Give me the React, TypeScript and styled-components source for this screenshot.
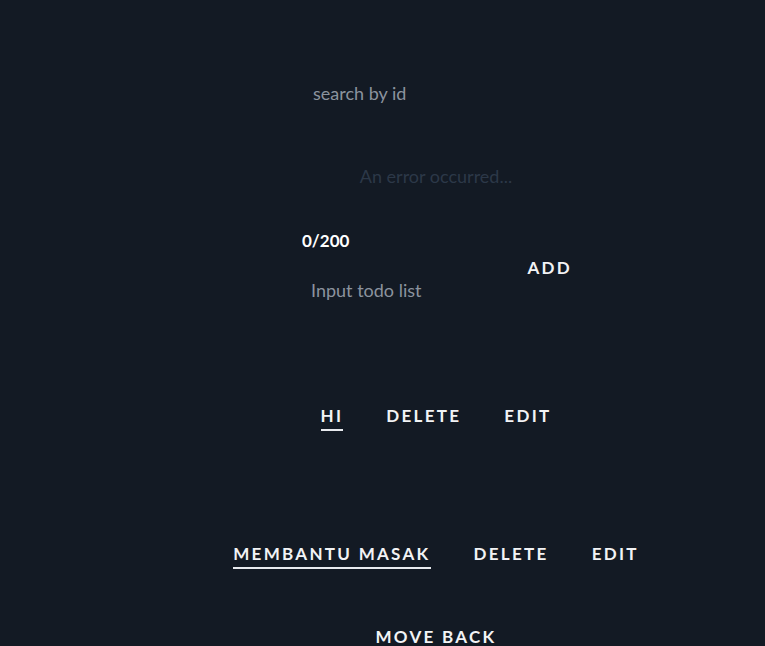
import React from "react";
import styled, { createGlobalStyle } from "styled-components";

const Global = createGlobalStyle`
  html, body { margin: 0; padding: 0; background: #131a24; }
  body { font-family: Lato, "Noto Sans", sans-serif; }
  * { box-sizing: border-box; }
`;

const Page = styled.div`
  min-height: 100vh;
  background: #131a24;
  padding-left: 107px;
  overflow: hidden;
`;

const Column = styled.main`
  display: flex;
  flex-direction: column;
  align-items: center;
  padding-top: 73px;
`;

const SearchInput = styled.input`
  width: 270px;
  height: 40px;
  padding: 0 12px;
  background: transparent;
  border: none;
  outline: none;
  color: #e5e7eb;
  font-family: inherit;
  font-size: 18px;
  &::placeholder { color: #8b939e; }
`;

const ErrorText = styled.p`
  margin: 51px 0 0;
  line-height: 24px;
  font-size: 18px;
  color: #2c3848;
`;

const Form = styled.form`
  margin-top: 43px;
  width: 268px;
  display: flex;
  justify-content: space-between;
  align-items: flex-start;
`;

const InputGroup = styled.div`
  display: flex;
  flex-direction: column;
`;

const Counter = styled.span`
  line-height: 20px;
  font-size: 17px;
  font-weight: 700;
  color: #ffffff;
`;

const TodoInput = styled.input`
  width: 200px;
  height: 40px;
  margin-top: 19px;
  padding: 0 9px;
  background: transparent;
  border: none;
  outline: none;
  font-family: inherit;
  font-size: 18px;
  color: #e5e7eb;
  &::placeholder { color: #8b939e; }
`;

const TextButton = styled.button<{ $underline?: boolean }>`
  background: transparent;
  border: none;
  padding: 0 0 ${(p) => (p.$underline ? "3px" : "5px")};
  border-bottom: ${(p) => (p.$underline ? "2px solid #e8eaee" : "none")};
  font-family: inherit;
  font-size: 17px;
  font-weight: 700;
  letter-spacing: 2.3px;
  color: #f2f3f5;
  line-height: 20px;
  cursor: pointer;
`;

const AddButton = styled(TextButton)`
  margin-top: 27px;
  padding: 0;
  margin-right: -2px;
`;

const List = styled.ul`
  list-style: none;
  margin: 96px 0 0;
  padding: 0;
  display: flex;
  flex-direction: column;
  align-items: center;
  gap: 113px;
`;

const Row = styled.li`
  display: flex;
  align-items: flex-start;
  gap: 43px;
`;

const BackButton = styled(TextButton)`
  margin-top: 58px;
`;

const todos = ["HI", "MEMBANTU MASAK"];

export default function App() {
  return (
    <Page>
      <Global />
      <Column>
        <SearchInput placeholder="search by id" />
        <ErrorText>An error occurred...</ErrorText>
        <Form onSubmit={(e) => e.preventDefault()}>
          <InputGroup>
            <Counter>0/200</Counter>
            <TodoInput placeholder="Input todo list" />
          </InputGroup>
          <AddButton type="submit">ADD</AddButton>
        </Form>
        <List>
          {todos.map((t) => (
            <Row key={t}>
              <TextButton $underline>{t}</TextButton>
              <TextButton>DELETE</TextButton>
              <TextButton>EDIT</TextButton>
            </Row>
          ))}
        </List>
        <BackButton>MOVE BACK</BackButton>
      </Column>
    </Page>
  );
}
